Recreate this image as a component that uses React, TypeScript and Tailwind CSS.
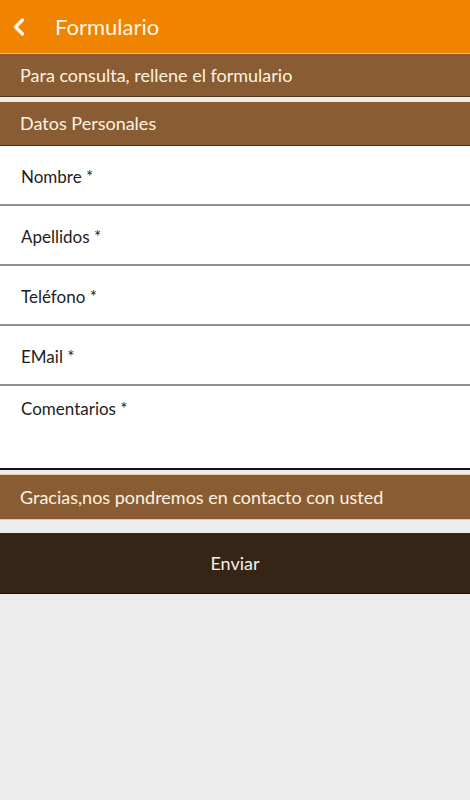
import { ChevronLeft } from 'lucide-react'

const fields = ['Nombre *', 'Apellidos *', 'Teléfono *', 'EMail *']

const Band = ({ label, tall }: { label: string; tall?: boolean }) => (
  <div
    className={
      (tall ? 'h-[44px] ' : 'h-[43px] ') +
      'flex items-center border-b border-[#4a3420] bg-[#8a5c33] px-5 text-[18px] text-[#fdf3e2]'
    }
  >
    {label}
  </div>
)

export default function App() {
  return (
    <div className="min-h-[800px] bg-[#ececec] font-['Lato',sans-serif]">
      <header className="flex h-[54px] items-center border-b border-[#f6b463] bg-[#f08300] text-[#fff6e6]">
        <ChevronLeft className="ml-[5px] h-7 w-7" strokeWidth={3} />
        <h1 className="ml-[22px] text-[22px]">Formulario</h1>
      </header>
      <Band label="Para consulta, rellene el formulario" />
      <div className="h-[5px] bg-[#efebe7]" />
      <Band label="Datos Personales" tall />
      <div className="bg-white">
        {fields.map(f => (
          <div
            key={f}
            className="flex h-[60px] items-center border-b-2 border-[#8e8e8e] px-[21px] pt-1 text-[17px] text-[#1e1e1e]"
          >
            {f}
          </div>
        ))}
        <div className="h-[84px] border-b-2 border-[#111] px-[21px] pt-[10px] text-[17px] text-[#1e1e1e]">
          Comentarios *
        </div>
      </div>
      <div className="h-[4px]" />
      <div className="border-y border-[#e9c89f]">
        <div className="flex h-[44px] items-center bg-[#8a5c33] px-5 text-[18px] text-[#fdf3e2]">
          Gracias,nos pondremos en contacto con usted
        </div>
      </div>
      <div className="h-[13px]" />
      <button className="flex h-[61px] w-full items-center justify-center border-b border-[#111] bg-[#362416] text-[18px] text-[#f5f0ea]">
        Enviar
      </button>
    </div>
  )
}
